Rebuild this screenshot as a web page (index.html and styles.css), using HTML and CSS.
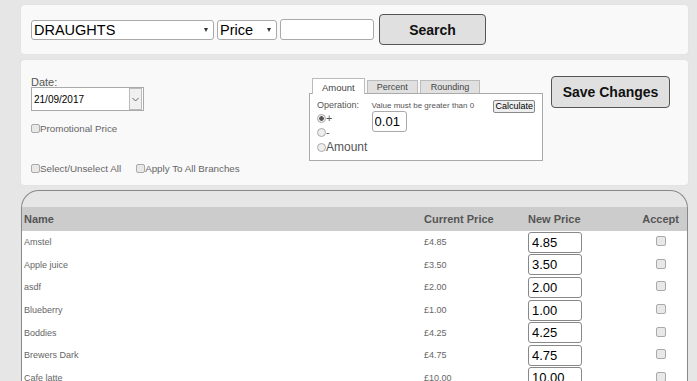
FILE: index.html
```html
<!DOCTYPE html>
<html lang="en">
<head>
    <title>Price Changes</title>
    <link rel="stylesheet" href="styles.css">
</head>
<body>
    <div class="page">
        <div class="panel search-bar">
            <span class="sel-wrap">
                <select class="sel-group">
                    <option>DRAUGHTS</option>
                </select>
            </span>
            <span class="sel-wrap">
                <select class="sel-field">
                    <option>Price</option>
                </select>
            </span>
            <input type="text" class="search-text">
            <button class="big-btn search-btn">Search</button>
        </div>

        <div class="panel options">
            <div class="left-col">
                <label class="date-label">Date:</label>
                <div class="date-box">
                    <span class="date-value">21/09/2017</span>
                    <span class="date-drop">
                        <svg width="7" height="5" viewBox="0 0 7 5"><path d="M0.5 1 L3.5 4 L6.5 1" fill="none" stroke="#666" stroke-width="1"/></svg>
                    </span>
                </div>
                <div class="check-line promo"><span class="cb"></span>Promotional Price</div>
                <div class="check-row">
                    <div class="check-line"><span class="cb"></span>Select/Unselect All</div>
                    <div class="check-line"><span class="cb"></span>Apply To All Branches</div>
                </div>
            </div>

            <div class="tabs">
                <div class="tab-list">
                    <span class="tab active">Amount</span>
                    <span class="tab">Percent</span>
                    <span class="tab">Rounding</span>
                </div>
                <div class="tab-panel">
                    <div class="op-col">
                        <div class="op-title">Operation:</div>
                        <div class="radio-line"><span class="radio on"></span>+</div>
                        <div class="radio-line"><span class="radio"></span>-</div>
                        <div class="radio-line big"><span class="radio"></span>Amount</div>
                    </div>
                    <div class="val-col">
                        <div class="val-note">Value must be greater than 0</div>
                        <input type="text" class="val-input" value="0.01">
                    </div>
                    <button class="calc-btn">Calculate</button>
                </div>
            </div>

            <button class="big-btn save-btn">Save Changes</button>
        </div>

        <div class="table-wrap">
            <table class="prices">
                <thead>
                    <tr>
                        <th class="c-name">Name</th>
                        <th class="c-cur">Current Price</th>
                        <th class="c-new">New Price</th>
                        <th class="c-acc">Accept</th>
                    </tr>
                </thead>
                <tbody>
                    <tr><td>Amstel</td><td>£4.85</td><td><input class="np" value="4.85"></td><td class="acc"><span class="cb"></span></td></tr>
                    <tr><td>Apple juice</td><td>£3.50</td><td><input class="np" value="3.50"></td><td class="acc"><span class="cb"></span></td></tr>
                    <tr><td>asdf</td><td>£2.00</td><td><input class="np" value="2.00"></td><td class="acc"><span class="cb"></span></td></tr>
                    <tr><td>Blueberry</td><td>£1.00</td><td><input class="np" value="1.00"></td><td class="acc"><span class="cb"></span></td></tr>
                    <tr><td>Boddies</td><td>£4.25</td><td><input class="np" value="4.25"></td><td class="acc"><span class="cb"></span></td></tr>
                    <tr><td>Brewers Dark</td><td>£4.75</td><td><input class="np" value="4.75"></td><td class="acc"><span class="cb"></span></td></tr>
                    <tr><td>Cafe latte</td><td>£10.00</td><td><input class="np" value="10.00"></td><td class="acc"><span class="cb"></span></td></tr>
                </tbody>
            </table>
        </div>
    </div>
</body>
</html>
```

FILE: styles.css
```css
body {
    margin: 0;
    background: #e6e6e6;
    font-family: 'Liberation Sans', Arial, sans-serif;
    overflow: hidden;
}
.page {
    margin: 5px 9px 0 21px;
}
.panel {
    background: #f9f9f9;
    border-radius: 3px;
    box-shadow: 0 0 1px rgba(0, 0, 0, 0.15);
}
.search-bar {
    height: 49px;
    display: flex;
    align-items: center;
    padding: 0 10px;
    box-sizing: border-box;
}
select, .search-text, .val-input, .np {
    font-family: 'Liberation Sans', Arial, sans-serif;
    border: 1px solid #a9a9a9;
    border-radius: 3px;
    background: #fff;
    color: #000;
    box-sizing: border-box;
}
.sel-wrap {
    position: relative;
    display: inline-block;
    margin-right: 3px;
    height: 20px;
}
.sel-wrap::after {
    content: "";
    position: absolute;
    right: 6px;
    top: 8px;
    border-left: 2.5px solid transparent;
    border-right: 2.5px solid transparent;
    border-top: 4px solid #333;
}
select {
    appearance: none;
    -webkit-appearance: none;
    height: 20px;
    font-size: 14.5px;
    padding: 0 0 0 2px;
    margin: 0;
    display: block;
}
.sel-group { width: 183px; }
.sel-field { width: 60px; }
.search-text {
    width: 94px;
    height: 21px;
    margin: 0;
}
.big-btn {
    font-family: 'Liberation Sans', Arial, sans-serif;
    font-weight: bold;
    font-size: 14px;
    color: #111;
    background: #e0e0e0;
    border: 1px solid #555;
    border-radius: 4px;
    cursor: pointer;
}
.search-btn {
    width: 107px;
    height: 31px;
    margin-left: 5px;
}
.options {
    margin-top: 6px;
    height: 125px;
    display: flex;
    padding: 0 0 0 10px;
    box-sizing: border-box;
}
.left-col {
    width: 278px;
    padding-top: 16px;
}
.date-label {
    display: block;
    font-size: 11px;
    color: #555;
    height: 11px;
}
.date-box {
    width: 113px;
    height: 24px;
    border: 1px solid #aaa;
    background: #fff;
    box-sizing: border-box;
    display: flex;
    align-items: center;
}
.date-value {
    flex: 1;
    font-size: 10px;
    padding-left: 2px;
    color: #000;
}
.date-drop {
    width: 11px;
    height: 20px;
    margin-right: 1px;
    border: 1px solid #bbb;
    background: #f0f0f0;
    display: flex;
    align-items: center;
    justify-content: center;
}
.check-line {
    font-size: 9.8px;
    color: #666;
    display: flex;
    align-items: center;
}
.promo {
    margin-top: 12px;
}
.check-row {
    display: flex;
    gap: 15px;
    margin-top: 29px;
}
.cb {
    display: inline-block;
    width: 7px;
    height: 7px;
    border: 1px solid #aaa;
    border-radius: 2px;
    background: #e8e8e8;
}
.tabs {
    margin-top: 18px;
    width: 234px;
}
.tab-list {
    display: flex;
    gap: 2px;
    padding-left: 3px;
    align-items: flex-end;
    height: 15px;
}
.tab {
    font-size: 9px;
    color: #444;
    background: #e0e0e0;
    border: 1px solid #bbb;
    border-bottom: none;
    height: 12px;
    line-height: 12px;
    padding: 0 9px;
}
.tab.active {
    font-size: 9.5px;
    background: #fff;
    height: 15px;
    line-height: 17px;
    padding: 0 9px;
    margin-bottom: -1px;
    position: relative;
}
.tab:nth-child(3) { padding: 0 10px; }
.tab-panel {
    height: 68px;
    border: 1px solid #aaa;
    background: #fff;
    box-sizing: border-box;
    display: flex;
    padding: 6px 7px 0 7px;
}
.op-col {
    width: 56px;
    font-size: 9px;
    color: #555;
}
.op-title { height: 11px; }
.radio-line {
    display: flex;
    align-items: center;
    height: 14px;
    font-size: 11px;
    color: #555;
}
.radio-line.big { font-size: 12px; height: 16px; }
.radio {
    width: 7px;
    height: 7px;
    border: 1px solid #aaa;
    border-radius: 50%;
    background: #eee;
    display: inline-block;
    box-sizing: content-box;
}
.radio.on {
    background: radial-gradient(circle, #555 0 2px, #eee 2.5px);
}
.val-col {
    width: 122px;
    font-size: 8px;
    color: #555;
    padding-top: 1px;
}
.val-input {
    width: 35px;
    height: 21px;
    font-size: 13px;
    padding: 0 2px;
    margin-top: 1px;
}
.calc-btn {
    font-family: 'Liberation Sans', Arial, sans-serif;
    font-size: 9px;
    height: 13px;
    padding: 0 1px;
    margin-left: 3px;
    border: 1px solid #888;
    border-radius: 2px;
    background: #eee;
    color: #000;
    line-height: 11px;
}
.save-btn {
    width: 119px;
    height: 32px;
    margin: 16px 0 0 8px;
}
.table-wrap {
    margin-top: 5px;
    border: 1px solid #888;
    border-bottom: none;
    border-radius: 18px 18px 0 0;
    padding-top: 16px;
    height: 200px;
    overflow: hidden;
    width: 667px;
    box-sizing: border-box;
}
.prices {
    width: 100%;
    border-collapse: collapse;
    background: #fff;
}
.prices th {
    background: #cccccc;
    font-size: 11px;
    font-weight: bold;
    color: #555;
    height: 24px;
    padding: 0;
    text-align: left;
}
.c-name { padding-left: 2px !important; width: 400px; }
.c-cur { width: 104px; }
.c-new { width: 100px; }
.prices th.c-acc {
    text-align: right;
    padding-right: 8px;
}
.prices td {
    font-size: 9px;
    color: #666;
    height: 22.6px;
    padding: 0;
}
.prices td:first-child { padding-left: 2px; }
.np {
    width: 54px;
    height: 21px;
    font-size: 13px;
    padding: 0 3px;
    display: block;
    border-color: #888;
}
.acc {
    text-align: right;
    padding-right: 21px !important;
}
.acc .cb {
    width: 8px;
    height: 8px;
}
```
